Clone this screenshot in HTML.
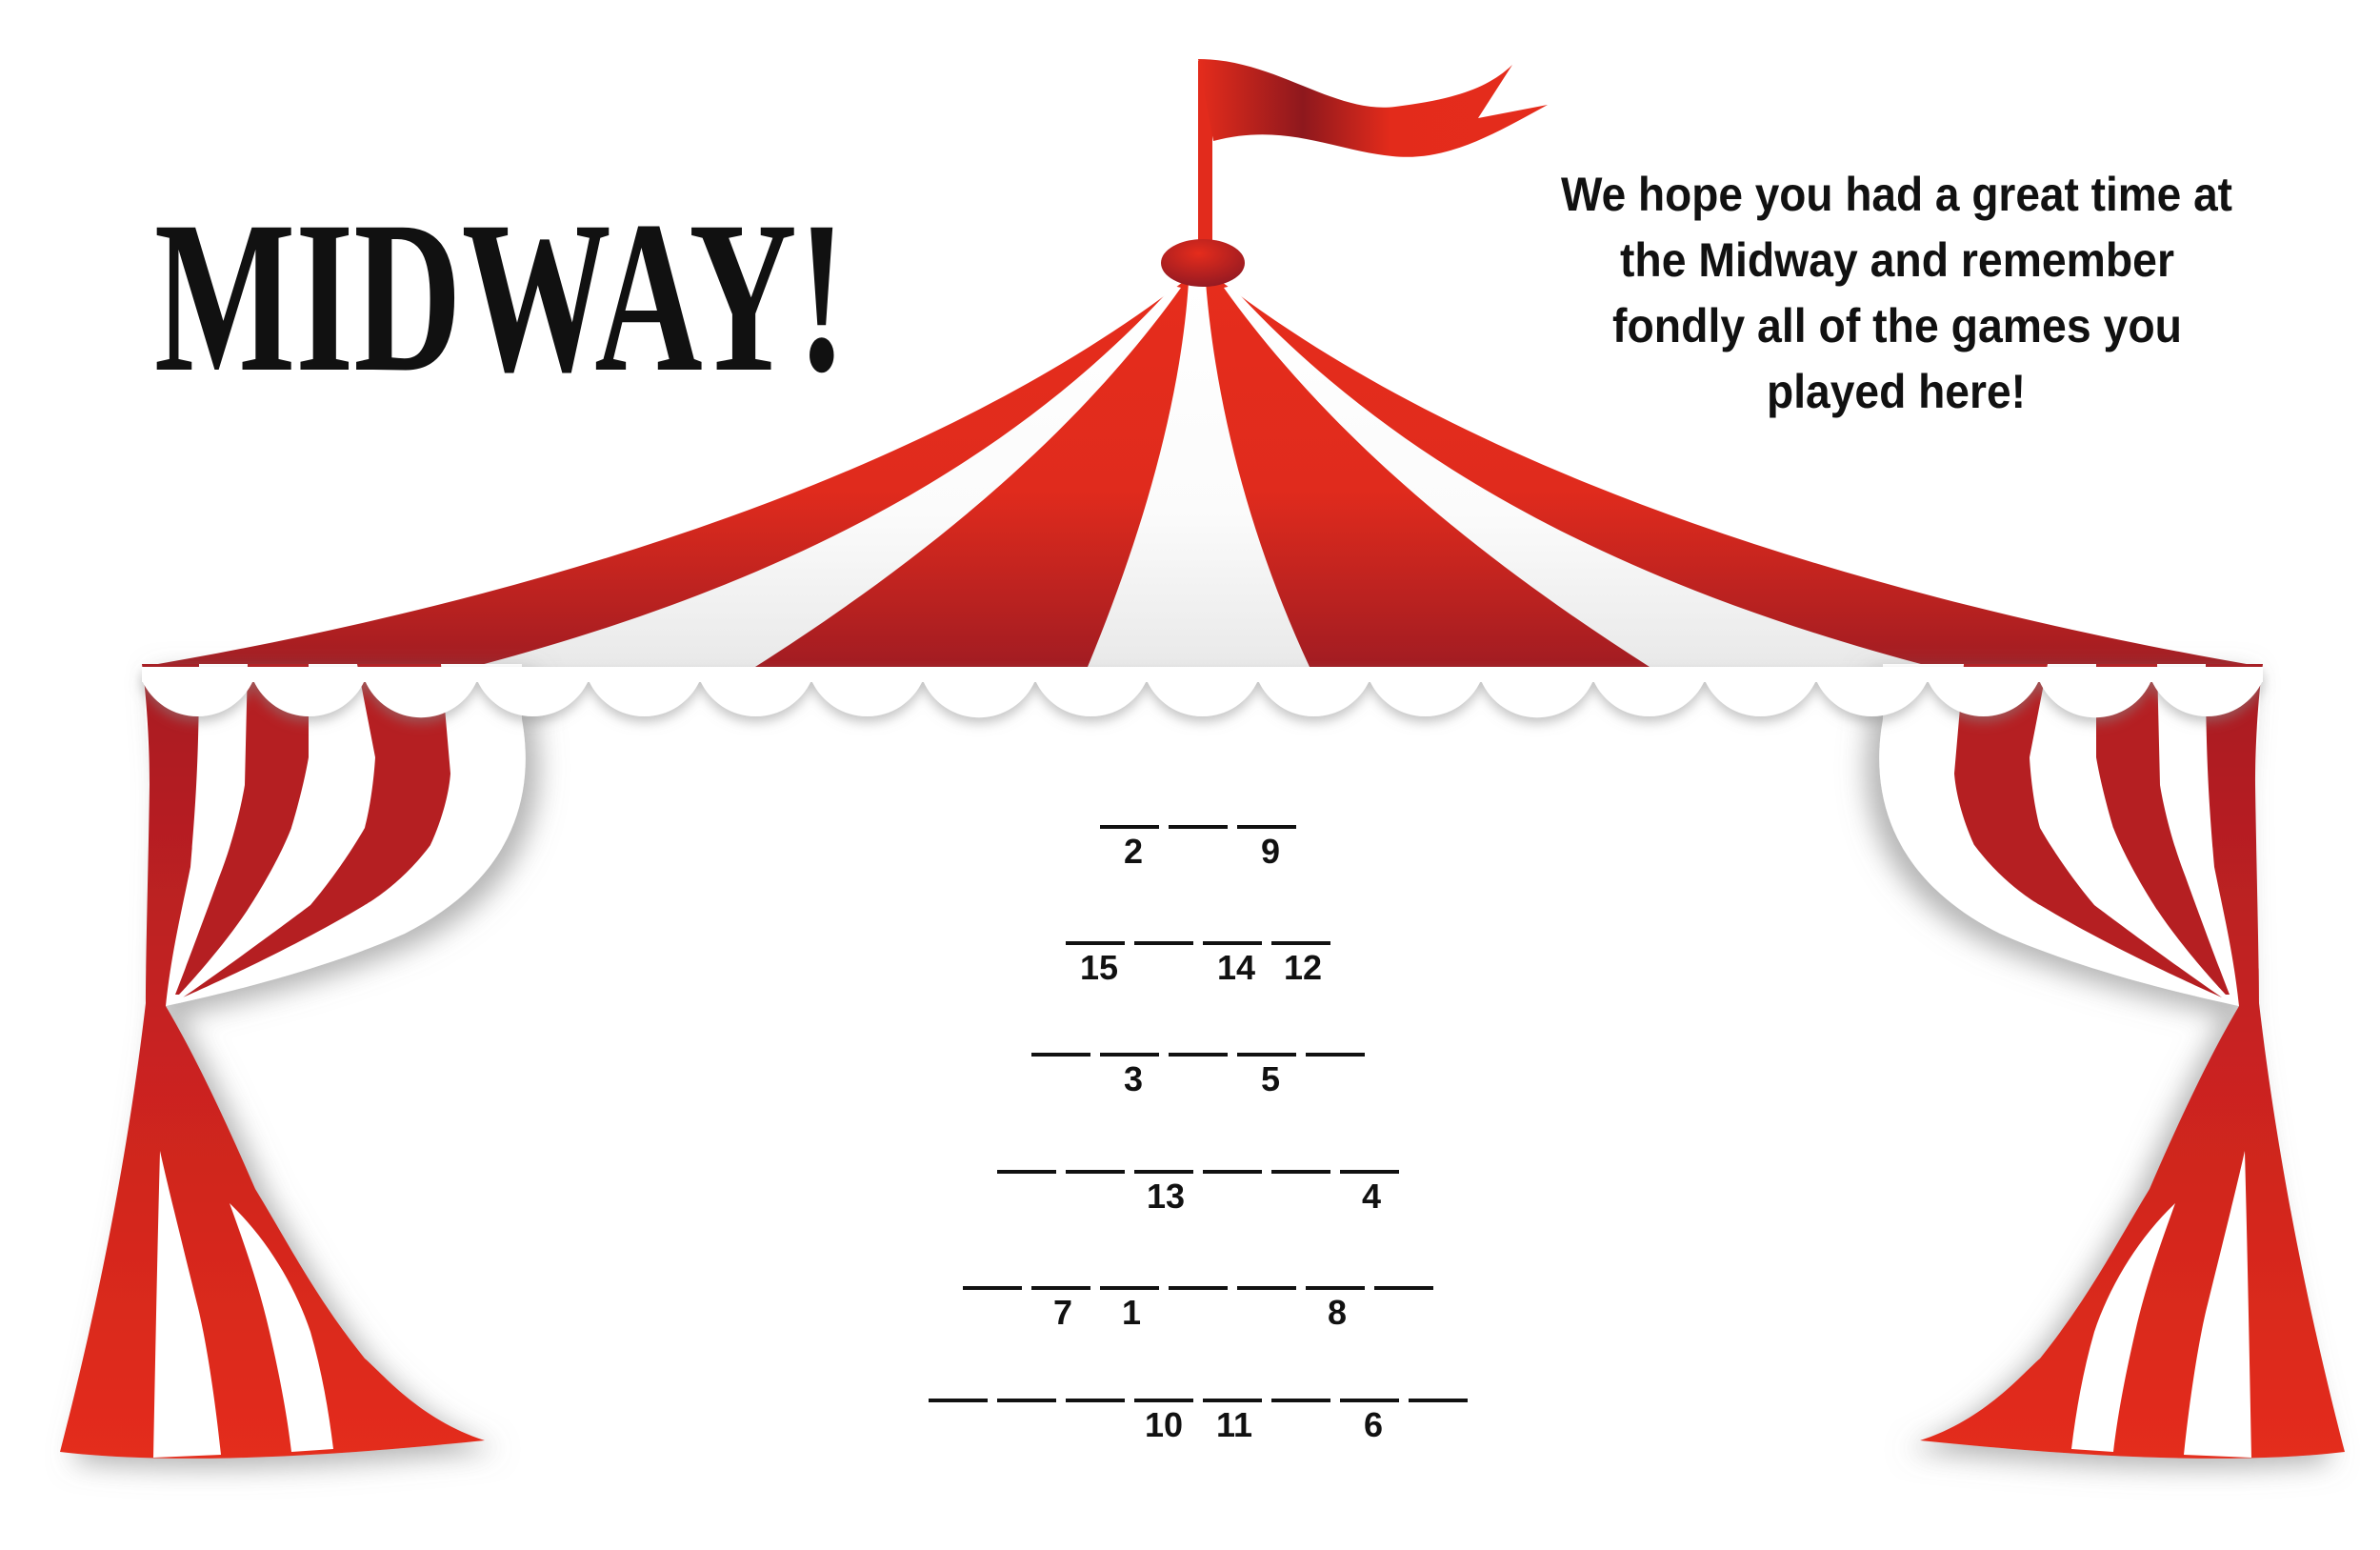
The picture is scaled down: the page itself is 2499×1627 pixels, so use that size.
<!DOCTYPE html>
<html><head><meta charset="utf-8"><style>
html,body{margin:0;padding:0;background:#fff;}
svg{display:block}
</style></head><body>
<svg width="2499" height="1627" viewBox="0 0 2499 1627" xmlns="http://www.w3.org/2000/svg">
<defs>
<linearGradient id="roofR" x1="0" y1="0" x2="0" y2="1" gradientUnits="objectBoundingBox">
<stop offset="0" stop-color="#e62d1c"/><stop offset="0.55" stop-color="#e02b1d"/><stop offset="1" stop-color="#a21c22"/></linearGradient>
<linearGradient id="roofW" x1="0" y1="0" x2="0" y2="1">
<stop offset="0" stop-color="#ffffff"/><stop offset="0.6" stop-color="#fbfbfb"/><stop offset="1" stop-color="#e9e9e9"/></linearGradient>
<linearGradient id="curR" x1="0" y1="0" x2="0" y2="1">
<stop offset="0" stop-color="#a81c22"/><stop offset="0.5" stop-color="#c92320"/><stop offset="1" stop-color="#e42d1c"/></linearGradient>
<linearGradient id="flagG" x1="0" y1="0" x2="1" y2="0">
<stop offset="0" stop-color="#e52c1c"/><stop offset="0.3" stop-color="#8e181d"/><stop offset="0.55" stop-color="#e32b1b"/><stop offset="1" stop-color="#e52c1c"/></linearGradient>
<radialGradient id="knobG" cx="0.45" cy="0.3" r="0.7">
<stop offset="0" stop-color="#e52c1c"/><stop offset="1" stop-color="#961a22"/></radialGradient>
<filter id="sh" x="-20%" y="-20%" width="160%" height="160%">
<feDropShadow dx="14" dy="10" stdDeviation="14" flood-color="#777" flood-opacity="0.55"/></filter>
<filter id="sh2" x="-5%" y="-50%" width="110%" height="250%">
<feDropShadow dx="0" dy="6" stdDeviation="6" flood-color="#888" flood-opacity="0.5"/></filter>
<g id="curtain">
 <g filter="url(#sh)">
  <path d="M149,697 L548,697 L548,755 C565,850 525,930 425,980 C335,1020 225,1045 174,1056 Z" fill="#fff"/>
  <path d="M149,697 C155,740 157,790 157,823 C156,900 153,1000 153,1053 C130,1250 90,1420 63,1524 C200,1540 380,1525 509,1512 C440,1490 400,1440 383,1426 C330,1360 300,1300 268,1248 C230,1160 200,1100 174,1056 C180,1000 190,960 200,910 C205,850 209,800 209,697 Z" fill="url(#curR)"/>
 </g>
 <path d="M260,697 L324,697 L324,795 C318,830 306,869 306,869 C290,910 260,955 260,955 C230,1000 188,1044 188,1044 L184,1044 C205,990 230,921 230,921 C250,870 257,824 257,824 Z" fill="#b51f22"/>
 <path d="M375,697 L463,697 L473,812 C470,850 452,887 452,887 C420,930 383,950 383,950 C300,1000 192,1047 192,1047 C260,1000 326,950 326,950 C360,910 383,869 383,869 C392,835 394,795 394,795 Z" fill="#b51f22"/>
 <path d="M168,1208 C165,1320 163,1430 161,1530 L232,1527 C225,1460 215,1400 207,1369 C190,1300 175,1240 168,1208 Z" fill="#fff"/>
 <path d="M241,1263 C258,1310 272,1350 283,1398 C295,1450 302,1490 306,1524 L350,1521 C345,1480 338,1440 326,1398 C310,1350 280,1300 241,1263 Z" fill="#fff"/>
</g>
</defs>

<rect x="1258" y="64" width="15" height="215" fill="#e22b1c"/>
<path d="M1258,62 C1340,62 1400,120 1465,112 C1520,105 1560,95 1588,68 L1552,124 L1625,110 C1570,140 1520,170 1462,164 C1400,158 1350,128 1274,148 Z" fill="url(#flagG)"/>

<path d="M149,700 C500,640 950,520 1242,296 Q1262,282 1283,296 C1575,520 2025,640 2376,700 Z" fill="url(#roofR)"/>
<path d="M497,700 C800,620 1050,500 1232,300 L1240,302 C1120,470 950,600 793,700 Z" fill="url(#roofW)"/>
<path d="M497,700 C800,620 1050,500 1232,300 L1240,302 C1120,470 950,600 793,700 Z" fill="url(#roofW)" transform="translate(2525,0) scale(-1,1)"/>
<path d="M1142,700 C1200,560 1240,420 1248,296 L1266,296 C1276,420 1310,560 1375,700 Z" fill="url(#roofW)"/>
<ellipse cx="1263" cy="276" rx="44" ry="25" fill="url(#knobG)"/>

<use href="#curtain"/>
<use href="#curtain" transform="translate(2525,0) scale(-1,1)"/>

<g filter="url(#sh2)" fill="#fff">
<rect x="149" y="700" width="2227" height="16"/>
<path d="M149,714 A64,64 0 0,0 266,714 A64,64 0 0,0 383,714 A64,64 0 0,0 501,714 A64,64 0 0,0 618,714 A64,64 0 0,0 735,714 A64,64 0 0,0 852,714 A64,64 0 0,0 969,714 A64,64 0 0,0 1087,714 A64,64 0 0,0 1204,714 A64,64 0 0,0 1321,714 A64,64 0 0,0 1438,714 A64,64 0 0,0 1555,714 A64,64 0 0,0 1673,714 A64,64 0 0,0 1790,714 A64,64 0 0,0 1907,714 A64,64 0 0,0 2024,714 A64,64 0 0,0 2141,714 A64,64 0 0,0 2259,714 A64,64 0 0,0 2376,714 L2376,712 L149,712 Z"/>
</g>

<text x="162" y="388" font-family="Liberation Serif, serif" font-weight="bold" font-size="228" textLength="727" lengthAdjust="spacingAndGlyphs" fill="#111">MIDWAY!</text>

<g font-family="Liberation Sans, sans-serif" font-weight="bold" font-size="50" fill="#111">
<text x="1639" y="221" textLength="705" lengthAdjust="spacingAndGlyphs">We hope you had a great time at</text>
<text x="1701" y="290" textLength="582" lengthAdjust="spacingAndGlyphs">the Midway and remember</text>
<text x="1693" y="359" textLength="598" lengthAdjust="spacingAndGlyphs">fondly all of the games you</text>
<text x="1855" y="428" textLength="272" lengthAdjust="spacingAndGlyphs">played here!</text>
</g>

<g fill="#111">
<rect x="1155" y="866" width="62" height="4"/><rect x="1227" y="866" width="62" height="4"/><rect x="1299" y="866" width="62" height="4"/>
<rect x="1119" y="988" width="62" height="4"/><rect x="1191" y="988" width="62" height="4"/><rect x="1263" y="988" width="62" height="4"/><rect x="1335" y="988" width="62" height="4"/>
<rect x="1083" y="1105" width="62" height="4"/><rect x="1155" y="1105" width="62" height="4"/><rect x="1227" y="1105" width="62" height="4"/><rect x="1299" y="1105" width="62" height="4"/><rect x="1371" y="1105" width="62" height="4"/>
<rect x="1047" y="1228" width="62" height="4"/><rect x="1119" y="1228" width="62" height="4"/><rect x="1191" y="1228" width="62" height="4"/><rect x="1263" y="1228" width="62" height="4"/><rect x="1335" y="1228" width="62" height="4"/><rect x="1407" y="1228" width="62" height="4"/>
<rect x="1011" y="1350" width="62" height="4"/><rect x="1083" y="1350" width="62" height="4"/><rect x="1155" y="1350" width="62" height="4"/><rect x="1227" y="1350" width="62" height="4"/><rect x="1299" y="1350" width="62" height="4"/><rect x="1371" y="1350" width="62" height="4"/><rect x="1443" y="1350" width="62" height="4"/>
<rect x="975" y="1468" width="62" height="4"/><rect x="1047" y="1468" width="62" height="4"/><rect x="1119" y="1468" width="62" height="4"/><rect x="1191" y="1468" width="62" height="4"/><rect x="1263" y="1468" width="62" height="4"/><rect x="1335" y="1468" width="62" height="4"/><rect x="1407" y="1468" width="62" height="4"/><rect x="1479" y="1468" width="62" height="4"/>
</g>
<g font-family="Liberation Sans, sans-serif" font-weight="bold" font-size="36" fill="#111" text-anchor="middle">
<text x="1190" y="906">2</text><text x="1334" y="906">9</text>
<text x="1154" y="1028">15</text><text x="1298" y="1028">14</text><text x="1368" y="1028">12</text>
<text x="1190" y="1145">3</text><text x="1334" y="1145">5</text>
<text x="1224" y="1268">13</text><text x="1440" y="1268">4</text>
<text x="1116" y="1390">7</text><text x="1188" y="1390">1</text><text x="1404" y="1390">8</text>
<text x="1222" y="1508">10</text><text x="1296" y="1508">11</text><text x="1442" y="1508">6</text>
</g>
</svg>
</body></html>
